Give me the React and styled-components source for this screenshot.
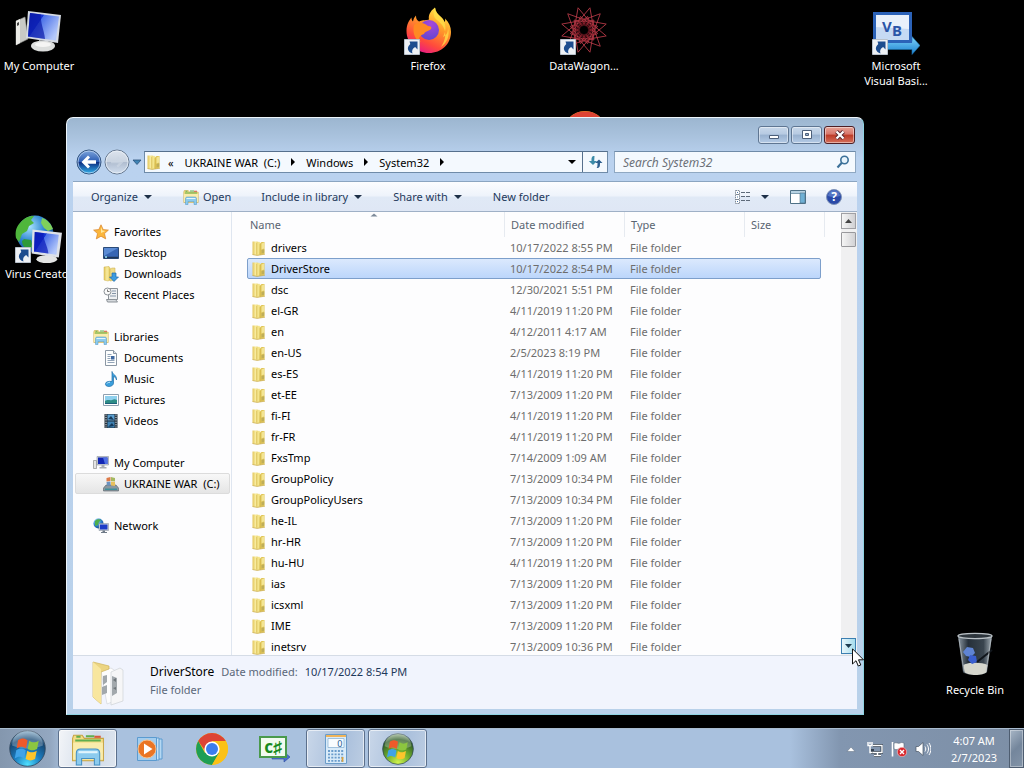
import styled, { createGlobalStyle } from 'styled-components';

const GlobalStyle = createGlobalStyle`
  * {
    box-sizing: border-box;
  }

  body {
    margin: 0;
    background: #000;
    font: 11px/15px 'Noto Sans', 'Open Sans', sans-serif;
    color: #000;
  }

  button, input, select {
    font: inherit;
    color: inherit;
  }

  button {
    padding: 0;
    border: 0;
    background: none;
    cursor: default;
  }

  svg {
    display: block;
    flex: none;
  }
`;

const Screen = styled.div`
  display: flex;
  flex-direction: column;
  height: 100vh;
  overflow: hidden;
`;

const Desktop = styled.main`
  position: relative;
  flex: 1;
  min-height: 0;
`;

const Shortcut = styled.button`
  position: absolute;
  left: ${(p) => p.$x}px;
  top: ${(p) => p.$y}px;
  width: 76px;
  display: flex;
  flex-direction: column;
  align-items: center;
  gap: 3px;
  color: #fff;
  white-space: nowrap;
`;

/* ---------- window ---------- */

const Window = styled.section`
  position: absolute;
  left: 66px;
  right: 160px;
  top: 117px;
  bottom: 13px;
  display: flex;
  flex-direction: column;
  padding: 0 6px 5px;
  border: 1px solid #8fd3e2;
  border-top-color: #eef6fc;
  border-left-color: #eef6fc;
  border-radius: 7px 7px 0 0;
  background: linear-gradient(#9cb6d0 0, #a9c2dd 18px, #bad2ef 40px, #b9d1ea 100%);
`;

const TitleBar = styled.div`
  display: flex;
  justify-content: flex-end;
  gap: 2px;
  height: 33px;
  padding: 8px 2px 0 0;
`;

const CaptionButton = styled.button`
  display: flex;
  align-items: center;
  justify-content: center;
  width: 31px;
  height: 18px;
  border: 1px solid ${(p) => (p.$close ? '#4d1f25' : '#5f7692')};
  border-radius: 3px;
  background: ${(p) =>
    p.$close
      ? 'linear-gradient(#e5a397 0, #d8766a 45%, #bd3a26 50%, #d4705c 100%)'
      : 'linear-gradient(#c8d8ea 0, #b6cae2 45%, #98b1cf 50%, #b4cbe6 100%)'};
  box-shadow: inset 0 0 0 1px rgba(255, 255, 255, 0.45);
`;

const AddressRow = styled.div`
  display: flex;
  align-items: center;
  height: 22px;
  margin-bottom: 8px;
  padding: 0 1px 0 3px;
`;

const Travel = styled.div`
  display: flex;
  align-items: center;
  gap: 2px;
  width: 68px;
`;

const AddressBar = styled.div`
  display: flex;
  flex: 462;
  height: 22px;
  border: 1px solid #6f8ba8;
  border-top-color: #56708d;
  background: #f4f9fe;
`;

const Crumbs = styled.nav`
  display: flex;
  flex: 1;
  align-items: center;
  gap: 11px;
  padding: 0 6px 0 1px;
`;

const CrumbRoot = styled.span`
  display: flex;
  align-items: center;
  gap: 6px;
`;

const Crumb = styled.a`
  color: #000;
  text-decoration: none;
  white-space: pre;
`;

const Chevron = styled.span`
  width: 0;
  height: 0;
  border: 4px solid transparent;
  border-right: 0;
  border-left-color: #000;
`;

const Triangle = styled.span`
  width: 0;
  height: 0;
  border: 4px solid transparent;
  border-bottom: 0;
  border-top-color: ${(p) => p.$color || '#1e3048'};
`;

const Push = styled.span`
  flex: 1;
`;

const RefreshButton = styled.button`
  display: flex;
  align-items: center;
  justify-content: center;
  width: 25px;
  border-left: 1px solid #56708d;
`;

const SearchBox = styled.label`
  display: flex;
  flex: 227;
  align-items: center;
  height: 22px;
  margin-left: 6px;
  padding: 0 5px 0 8px;
  border: 1px solid #8fa8c2;
  border-top-color: #6f8ba8;
  background: #f4f9fe;
`;

const SearchInput = styled.input`
  flex: 1;
  min-width: 0;
  padding: 0;
  border: 0;
  outline: 0;
  background: none;
  font-size: 12px;

  &::placeholder {
    color: #6b7078;
    font-style: italic;
    opacity: 1;
  }
`;

const Client = styled.div`
  display: flex;
  flex: 1;
  flex-direction: column;
  min-height: 0;
  border-top: 1px solid #8ba5c1;
  background: #fdfdfe;
`;

const Toolbar = styled.div`
  display: flex;
  align-items: center;
  height: 30px;
  padding: 0 15px 0 18px;
  border-bottom: 1px solid #9fb0c6;
  background: linear-gradient(#fcfdff 0, #eef3fb 48%, #e0e9f6 52%, #dfe7f5 100%);
  color: #1e395b;
`;

const ToolButton = styled.button`
  display: flex;
  align-items: center;
  gap: ${(p) => p.$gap || 6}px;
  margin-right: ${(p) => p.$after || 0}px;
`;

const Panes = styled.div`
  display: flex;
  flex: 1;
  min-height: 0;
`;

const Tree = styled.nav`
  display: flex;
  flex-direction: column;
  gap: 21px;
  width: 159px;
  padding: 9px 1px 0 2px;
  border-right: 1px solid #dfe6f0;
`;

const TreeItem = styled.a`
  display: flex;
  align-items: center;
  gap: 5px;
  height: 21px;
  padding-left: ${(p) => (p.$top ? 17 : 27)}px;
  border: 1px solid ${(p) => (p.$current ? '#dcdcdc' : 'transparent')};
  border-radius: 2px;
  background: ${(p) => (p.$current ? 'linear-gradient(#f8f8f8, #e5e5e5)' : 'none')};
  color: #000;
  text-decoration: none;
  white-space: pre;
`;

const ListPane = styled.div`
  flex: 1;
  min-width: 0;
  overflow: hidden;
`;

const FileTable = styled.table`
  display: block;
  margin-left: 15px;

  thead, tbody {
    display: block;
  }
`;

const HeadRow = styled.tr`
  display: grid;
  grid-template-columns: 258px 120px 120px 80px;
  height: 25px;
  color: #5a6572;
`;

const HeadCell = styled.th`
  position: relative;
  padding: 5px 0 0 ${(p) => (p.$first ? 3 : 6)}px;
  border-right: 1px solid #e6eaf0;
  font-weight: 400;
  text-align: left;
`;

const SortMark = styled.svg`
  position: absolute;
  left: 50%;
  top: 1px;
  margin-left: -6px;
`;

const FileRow = styled.tr`
  display: grid;
  grid-template-columns: 256px 120px 120px 76px;
  width: 574px;
  height: 21px;
  border: 1px solid ${(p) => (p.$selected ? '#7d9fcb' : 'transparent')};
  border-radius: 2px;
  background: ${(p) => (p.$selected ? 'linear-gradient(#dbe9fd, #bcd6fb)' : 'none')};
  color: #6d6d6d;
`;

const Cell = styled.td`
  display: flex;
  align-items: center;
  gap: 4px;
  padding: 0 0 0 ${(p) => (p.$name ? 3 : 6)}px;
  color: ${(p) => (p.$name ? '#000' : 'inherit')};
  white-space: nowrap;
`;

const ScrollBar = styled.div`
  display: flex;
  flex-direction: column;
  width: 16px;
  padding: 1px 1px 1px 0;
  background: #f0f0f1;
`;

const ScrollButton = styled.button`
  display: flex;
  align-items: center;
  justify-content: center;
  height: 16px;
  border: 1px solid ${(p) => (p.$hot ? '#3c7fb1' : '#a0a0a4')};
  background: ${(p) =>
    p.$hot ? 'linear-gradient(90deg, #e8f6fb, #a5dcec)' : 'linear-gradient(90deg, #f6f6f6, #d0d0d3)'};
`;

const Thumb = styled.div`
  height: 15px;
  margin: 3px 0 auto;
  border: 1px solid #98989c;
  border-radius: 1px;
  background: linear-gradient(90deg, #f5f5f5, #d2d2d5);
`;

const Details = styled.footer`
  display: flex;
  align-items: center;
  gap: 20px;
  height: 54px;
  padding-left: 17px;
  border-top: 1px solid #d5dce6;
  background: #f1f4fd;
  color: #5a6779;
`;

const DetailText = styled.div`
  display: grid;
  grid-template-columns: auto auto auto;
  column-gap: 7px;
  row-gap: 3px;
  padding-bottom: 5px;
`;

const DetailTitle = styled.span`
  color: #000;
  font-size: 12px;
`;

const DetailValue = styled.span`
  color: #1e395b;
`;

/* ---------- taskbar ---------- */

const Taskbar = styled.footer`
  display: flex;
  align-items: stretch;
  height: 40px;
  border-top: 1px solid #a9bccf;
  background: linear-gradient(90deg, #8497ae 0, #93a7c0 50px, #a9c1de 66px, #a9c1de 790px, #8296b0 840px, #7d8fa6 100%);
`;

const TaskButton = styled.button`
  display: flex;
  align-items: center;
  justify-content: center;
  width: ${(p) => p.$width || 59}px;
  margin-right: 3px;
  border: 1px solid ${(p) => (p.$open ? '#5c708c' : 'transparent')};
  border-radius: 3px;
  background: ${(p) => {
    if (p.$active) return 'linear-gradient(100deg, #f3f5f8, #cfdae8 60%, #dfe6ef)';
    return p.$open ? 'linear-gradient(100deg, #c9d7e9, #a9bfdc 60%, #bccde2)' : 'none';
  }};
  box-shadow: ${(p) => (p.$open ? 'inset 0 0 0 1px rgba(255, 255, 255, 0.6)' : 'none')};
`;

const Tray = styled.div`
  display: flex;
  align-items: center;
  gap: 8px;
  margin-left: auto;
`;

const Clock = styled.time`
  width: 70px;
  margin-right: -8px;
  color: #fff;
  line-height: 17px;
  text-align: center;
`;

const ShowDesktop = styled.button`
  width: 15px;
  align-self: stretch;
  border: 1px solid #4e5d70;
  background: linear-gradient(135deg, #a8b6c6, #74869c 50%, #8394a8);
  box-shadow: inset 0 0 0 1px rgba(255, 255, 255, 0.35);
`;

const Pointer = styled.svg`
  position: absolute;
  right: 160px;
  bottom: 61px;
`;

/* ---------- drawings ---------- */

const Gradients = () => (
  <svg width="0" height="0" style={{ position: 'absolute' }} aria-hidden="true">
    <defs>
      <linearGradient id="folder" x2="1" y2="0">
        <stop offset="0" stopColor="#e2c55a" />
        <stop offset="0.5" stopColor="#f8eb9e" />
        <stop offset="1" stopColor="#e6cd62" />
      </linearGradient>
      <linearGradient id="screenBlue" x2="1" y2="0.6">
        <stop offset="0" stopColor="#0b1fae" />
        <stop offset="0.4" stopColor="#1636d6" />
        <stop offset="0.42" stopColor="#4a70e8" />
        <stop offset="1" stopColor="#b4c8fa" />
      </linearGradient>
      <radialGradient id="globe" cx="0.35" cy="0.3" r="0.8">
        <stop offset="0" stopColor="#a8e2ff" />
        <stop offset="0.5" stopColor="#2f86d0" />
        <stop offset="1" stopColor="#0b3a80" />
      </radialGradient>
      <linearGradient id="fox" x1="0.8" y1="0" x2="0.3" y2="1">
        <stop offset="0" stopColor="#fff04a" />
        <stop offset="0.4" stopColor="#ff9a2a" />
        <stop offset="0.75" stopColor="#ff4a3c" />
        <stop offset="1" stopColor="#e8178a" />
      </linearGradient>
      <radialGradient id="foxCore" cx="0.6" cy="0.2" r="0.9">
        <stop offset="0" stopColor="#a648dc" />
        <stop offset="1" stopColor="#5a45cf" />
      </radialGradient>
      <radialGradient id="orbBlue" cx="0.5" cy="0.95" r="0.95">
        <stop offset="0" stopColor="#4fe0ff" />
        <stop offset="0.4" stopColor="#1a7cc0" />
        <stop offset="0.75" stopColor="#174873" />
        <stop offset="1" stopColor="#8fb4cf" />
      </radialGradient>
      <radialGradient id="orbGreen" cx="0.5" cy="0.95" r="0.95">
        <stop offset="0" stopColor="#d2f44e" />
        <stop offset="0.45" stopColor="#6aa82c" />
        <stop offset="0.8" stopColor="#2f5c26" />
        <stop offset="1" stopColor="#a5bd9c" />
      </radialGradient>
      <linearGradient id="backBlue" x2="0" y2="1">
        <stop offset="0" stopColor="#7fa6dc" />
        <stop offset="0.48" stopColor="#2c5db4" />
        <stop offset="0.52" stopColor="#0d2f83" />
        <stop offset="1" stopColor="#35b6ee" />
      </linearGradient>
      <linearGradient id="forwardGrey" x2="0" y2="1">
        <stop offset="0" stopColor="#dde4ee" />
        <stop offset="0.48" stopColor="#c9d3e0" />
        <stop offset="0.52" stopColor="#b0bdd0" />
        <stop offset="1" stopColor="#d3e0f0" />
      </linearGradient>
      <linearGradient id="arrowBlue" x2="0" y2="1">
        <stop offset="0" stopColor="#7fd4fa" />
        <stop offset="1" stopColor="#1a7fd0" />
      </linearGradient>
      <linearGradient id="glass" x2="1" y2="0">
        <stop offset="0" stopColor="#8d99a3" />
        <stop offset="0.3" stopColor="#26303a" />
        <stop offset="0.75" stopColor="#3a454f" />
        <stop offset="1" stopColor="#a5b0b8" />
      </linearGradient>
    </defs>
  </svg>
);

const ShortcutBadge = () => (
  <g>
    <path d="M0.5 32.5h15v15h-15z" fill="#eef1f5" stroke="#b9c2cc" />
    <path d="M5.500 34.500h8v8l-2.400-2.400c-2.600 1.800-3.600 3.500-2.600 6.400-4.800-1.200-6.400-5.800-2.200-9.400z" fill="#1d4d8f" />
  </g>
);

const ComputerArt = () => (
  <svg width="48" height="48" viewBox="0 0 48 48">
    <path d="M1 14l9-4 3 22-12 6z" fill="#c9cac6" stroke="#8c8d8a" strokeWidth="0.6" />
    <path d="M1 14l4-2v24l-4 2z" fill="#ecece8" />
    <path d="M2 16l2-1v3l-2 1z" fill="#444" />
    <path d="M24 33l8 2v5h-8z" fill="#b5b7b8" />
    <ellipse cx="28" cy="39" rx="12" ry="5.500" fill="#dcdedd" />
    <ellipse cx="28" cy="37.500" rx="8" ry="2.600" fill="#f5f5f4" />
    <path d="M13 4l33 4-3 28-32-5z" fill="#d5dae2" />
    <path d="M15 6l29 3.500-3 24-28-4z" fill="url(#screenBlue)" />
    <path d="M15 6l11 1.500c-1 8 3 15 4 24.500l-17-2.500z" fill="#0a19a8" opacity="0.7" />
  </svg>
);

const VirusArt = () => (
  <svg width="48" height="48" viewBox="0 0 48 48">
    <circle cx="20" cy="19" r="18.500" fill="url(#globe)" />
    <path d="M5 8c5-6 9-7 14-7l-3 4 3 3-5 3-2 5-5 3-3 8-3-4c-1-6 0-11 4-15z" fill="#4fb63c" />
    <path d="M27 3c6 2 9 6 11 11l-5 2-4-3-3-5z" fill="#7fd05a" />
    <path d="M9 24l7 1 2 7-5 3c-4-2-6-6-6-9z" fill="#2f9a3a" />
    <g transform="translate(11 13) scale(0.800)">
      <path d="M24 33l8 2v6h-8z" fill="#b5b7b8" />
      <ellipse cx="26" cy="39" rx="13" ry="5" fill="#e3e4e3" />
      <path d="M8 2l37 4-4 31-34-5z" fill="#dde1e8" />
      <path d="M11 5l30 3.500-3 25-28-4z" fill="url(#screenBlue)" />
      <path d="M11 5l11 1.500c-1 8 5 15 6 25.500l-18-2.500z" fill="#0a19b8" opacity="0.7" />
    </g>
    <ShortcutBadge />
  </svg>
);

const FirefoxArt = () => (
  <svg width="48" height="48" viewBox="0 0 48 48">
    <path
      d="M2.500 24c0-7 3-11 5-13.500 0 2 .5 3 1.500 4 .5-3 1.500-4.500 3-6 0 2.500.5 4.500 3 6 4-2 8-1 10-2C24 9 26 4 31 0.500c.5 4.500 3 7 6 9.500 2 1.500 3 3.500 3.500 5 .8-1 .8-2 .5-3.500C45 15 47 20 47 25c0 12-9.500 21-22 21S2.500 36 2.500 24z"
      fill="url(#fox)"
    />
    <path d="M31 0.500c.5 4.500 3 7 6 9.500 5 5 6 13 2 20 4-2 5-5 5-9 2 8-1 15-7 19 8-12 4-21-4-27-4-3-4-8-2-12.500z" fill="#ffe14a" opacity="0.75" />
    <circle cx="25" cy="23" r="10" fill="url(#foxCore)" />
    <path d="M10 18c4-3 9-3 14 1 3 0 4 1 3 3-2 2-6 2-7 5-4 1-7 5-3 8-5-1-9-8-7-17z" fill="#ff8a22" />
    <ShortcutBadge />
  </svg>
);

const STAR_SPOKES = [0, 30, 60, 90, 120, 150, 180, 210, 240, 270, 300, 330];

const StarArt = () => (
  <svg width="48" height="48" viewBox="0 0 48 48">
    <g fill="none" stroke="#b83a48" strokeWidth="0.8">
      {STAR_SPOKES.map((angle) => (
        <g key={angle} transform={`rotate(${angle + 15} 24 23)`}>
          <path d="M24 0l-7 15M24 0l7 15M24 9l-6 8M24 9l6 8" />
          <circle cx="24" cy="14.500" r="2.500" stroke="#93222e" />
          <circle cx="24" cy="17" r="1.500" stroke="#7d1c28" />
        </g>
      ))}
    </g>
    <ShortcutBadge />
  </svg>
);

const ChromeArt = ({ size }) => (
  <svg width={size} height={size} viewBox="0 0 32 32">
    <circle cx="16" cy="16" r="16" fill="#fbc116" />
    <path d="M2.200 8A16 16 0 0 1 29.800 8L16 8.500 10 19z" fill="#dd4435" />
    <path d="M2.200 8A16 16 0 0 0 16 32L23 20 16 16 9 20z" fill="#1e9e54" />
    <path d="M29.800 8A16 16 0 0 1 16 32L23 20 16 8.500 16 8z" fill="#fbc116" />
    <circle cx="16" cy="16" r="7.600" fill="#fff" />
    <circle cx="16" cy="16" r="6" fill="#3b7ded" />
  </svg>
);

const VisualBasicArt = () => (
  <svg width="48" height="48" viewBox="0 0 48 48">
    <path d="M10 34.500h30v-5l8 9-8 9v-5H10z" fill="url(#arrowBlue)" stroke="#1b6fa8" strokeWidth="0.600" />
    <path d="M1 5h39v31H1z" fill="#2b62b8" />
    <path d="M4 8h33v25H4z" fill="#e9f1fb" />
    <path d="M4 20l33 2v11H4z" fill="#c6daf4" />
    <text x="10" y="25" fontSize="15" fontWeight="700" fill="#2a55a8" fontFamily="Noto Sans">V</text>
    <text x="20" y="29" fontSize="15" fontWeight="700" fill="#2a55a8" fontFamily="Noto Sans">B</text>
    <ShortcutBadge />
  </svg>
);

const RecycleArt = () => (
  <svg width="48" height="48" viewBox="0 0 48 48">
    <path d="M7 5h34l-5 36c-3 4-21 4-24 0z" fill="url(#glass)" />
    <path d="M12.500 34c4-3 19-3 24 0l-1 7c-3 4-19 4-22 0z" fill="#d5d6cd" />
    <path d="M12 21l4-5 6 1 2 5-4 4-5-1z" fill="#5f84d4" />
    <path d="M17 29l2-5 6 1 1 6-5 2z" fill="#3a5fd0" />
    <path d="M41 19L26 31" stroke="#11161c" strokeWidth="2" />
    <ellipse cx="24" cy="5" rx="17" ry="2.600" fill="#2d353c" stroke="#b9c0c5" strokeWidth="1.400" />
    <path d="M8 8l5 32M40 8l-5 32" stroke="#c0c6ca" strokeWidth="1" opacity="0.600" />
  </svg>
);

const FolderIcon = () => (
  <svg width="16" height="16" viewBox="0 0 16 16">
    <path d="M1.500 1.500h5l1 1v12l-1.500.8-4.500-.8z" fill="url(#folder)" />
    <path d="M6 3l2-1.500 1.500 1.500v11L7 15.500 5.800 14.500z" fill="#f4e58c" />
    <path d="M9 3.500l1.500-1.500h3v12L8.500 15z" fill="#e0c558" />
    <path d="M10.500 3.500l2.500-1v6l-2.500 1z" fill="#f3e593" />
    <path d="M10.500 10l2.800-.8v3.500l-2.800.8z" fill="#bfae58" />
    <path d="M5.800 3v11.500M9 4v10.500" stroke="#cfae42" strokeWidth="0.600" />
    <path d="M1.500 14.500l4.500.9 8-1.200" fill="none" stroke="#c6a53c" strokeWidth="0.700" />
  </svg>
);

const LibraryIcon = ({ size = 16 }) => (
  <svg width={size} height={size} viewBox="0 0 32 32">
    <path d="M1.500 6l1-3h8l2 3h18v21h-29z" fill="#f3dc84" stroke="#c7a443" />
    <path d="M4 8h24M14 4h8M5 4.500h4" stroke="#5fae4e" strokeWidth="2" />
    <path d="M22 4.500h6" stroke="#d8593a" strokeWidth="2" />
    <path d="M2 10h28v16H2z" fill="#faecac" />
    <path d="M5 20c0-3 1-4 4-4h14c3 0 4 1 4 4v11h-5v-6H10v6H5z" fill="#8ccbee" stroke="#4791c4" />
    <path d="M7 19h18" stroke="#e2f5fd" strokeWidth="2" />
  </svg>
);

const StarIcon = () => (
  <svg width="16" height="16" viewBox="0 0 16 16">
    <path d="M8 .8l2.200 4.800 5.200.5-3.900 3.500 1.200 5.300L8 12.200l-4.700 2.700 1.200-5.300L.6 6.100l5.200-.5z" fill="#fbb63c" stroke="#d9822b" strokeWidth="0.700" />
    <path d="M8 3l1.400 3.600 3 .3L8 9z" fill="#ffe9a0" />
  </svg>
);

const DesktopIcon = () => (
  <svg width="16" height="16" viewBox="0 0 16 16">
    <path d="M.5 2.500h15v11H.5z" fill="#3766b4" stroke="#2a4a78" />
    <path d="M1 3h14L1 11z" fill="#5b8bd4" />
    <path d="M1 12.500h14" stroke="#1e3555" strokeWidth="1.500" />
    <path d="M2 11h2v2H2z" fill="#7fc0d8" />
  </svg>
);

const DownloadIcon = () => (
  <svg width="16" height="16" viewBox="0 0 16 16">
    <path d="M1 1l5-.5L7 2v12l-2 1-4-1z" fill="url(#folder)" stroke="#cdb04c" strokeWidth="0.500" />
    <path d="M7 3l2-1h3v12l-5 1z" fill="#efdc88" stroke="#c9aa45" strokeWidth="0.500" />
    <path d="M9 7h4v4h2.500L11 15.500 6.500 11H9z" fill="#3c9be0" stroke="#1f6cae" strokeWidth="0.700" />
  </svg>
);

const RecentIcon = () => (
  <svg width="16" height="16" viewBox="0 0 16 16">
    <path d="M5.500 1.500h9v11h-9z" fill="#eef0f2" stroke="#8c9298" />
    <path d="M3.500 12.500h9l2 2.500h-10z" fill="#d6dade" stroke="#8c9298" />
    <path d="M9 4h4M9 6.500h4M7 9h6" stroke="#8595a8" />
    <circle cx="4.500" cy="4.500" r="3.500" fill="#fafafa" stroke="#8c9298" />
    <path d="M4.500 2.500v2h2" stroke="#555" fill="none" strokeWidth="0.800" />
  </svg>
);

const DocumentIcon = () => (
  <svg width="16" height="16" viewBox="0 0 16 16">
    <path d="M2.500 .5h8l3 3v12h-11z" fill="#fdfefe" stroke="#8b97a4" />
    <path d="M10.500 .5v3h3" fill="#dfe5ec" stroke="#8b97a4" />
    <path d="M4.500 4.500h4M4.500 6.500h3M4.500 8.500h3M4.500 10.500h7M4.500 12.500h7" stroke="#93a4b8" />
    <path d="M8 6h3.500v3.500H8z" fill="#3f68a0" />
  </svg>
);

const MusicIcon = () => (
  <svg width="16" height="16" viewBox="0 0 16 16">
    <path d="M9 .5c.5 3 5 3.500 4.500 8.500-.5-2-1.500-3-3-3.500v6.500c0 2-2 3.500-4.500 3.500S2 14.300 2.500 12.500 5.500 10 9 10.500z" fill="#3b9fdc" stroke="#1f6ea8" strokeWidth="0.700" />
    <path d="M4 12.500c.5-1 1.500-1.300 3-1.200" stroke="#bfe6fa" fill="none" />
  </svg>
);

const PictureIcon = () => (
  <svg width="16" height="16" viewBox="0 0 16 16">
    <path d="M.5 2.500h15v11H.5z" fill="#fff" stroke="#8fa0b0" />
    <path d="M2 4h12v8H2z" fill="#8fd0ee" />
    <path d="M2 9c3-2 5 0 7-1s3-1 5 0v4H2z" fill="#2d8c86" />
    <path d="M2 11h12v1H2z" fill="#1d5f7a" />
  </svg>
);

const VideoIcon = () => (
  <svg width="16" height="16" viewBox="0 0 16 16">
    <path d="M1.500 1h13v14h-13z" fill="#23303c" />
    <path d="M4.500 1.500h7v6h-7z" fill="#5b9fd0" />
    <path d="M4.500 8.500h7v6h-7z" fill="#3f83b5" />
    <path d="M5 6l3-3 3 4zM5 14l4-4 2 3z" fill="#153a5c" />
    <path d="M3 1.500v13M13 1.500v13" stroke="#f4f6f8" strokeDasharray="1.200 1.200" />
  </svg>
);

const PcIcon = () => (
  <svg width="16" height="16" viewBox="0 0 16 16">
    <path d="M.5 5.500h3v8h-3z" fill="#e4e4e4" stroke="#8e8e8e" strokeWidth="0.700" />
    <path d="M4 1.500h11.500v8.500H4z" fill="#cdd3dc" stroke="#8b929c" strokeWidth="0.600" />
    <path d="M5 2.500h9.500V9H5z" fill="#1226b4" />
    <path d="M10 2.500h4.500V9H12z" fill="#4f70e4" />
    <path d="M8.500 10h3v2h-3zM6.500 12h7v1.500h-7z" fill="#a9adb2" />
  </svg>
);

const DriveIcon = () => (
  <svg width="16" height="16" viewBox="0 0 16 16">
    <path d="M3 9h10l2.500 3v3H.5v-3z" fill="#8a979f" stroke="#566068" strokeWidth="0.600" />
    <path d="M2 12.500h12v1.500H2z" fill="#3f8f9a" />
    <path d="M3.500 2l4-1v4l-4 .5z" fill="#dd7a48" />
    <path d="M8 1l4 1v3.500L8 5z" fill="#a5b860" />
    <path d="M3.500 6l4-.5v4L4 9.500z" fill="#6a92c0" />
    <path d="M8 5.500l4 .5v4l-4-.5z" fill="#e8c05c" />
  </svg>
);

const NetworkIcon = () => (
  <svg width="16" height="16" viewBox="0 0 16 16">
    <circle cx="5.500" cy="5.500" r="5" fill="url(#globe)" />
    <path d="M2 3c2-2 4-2 6-1L6 4 5 7 2 8z" fill="#4fae4a" />
    <path d="M6 5.500h9.500v7H6z" fill="#cdd3dc" stroke="#7e8896" strokeWidth="0.500" />
    <path d="M7 6.500h7.500v5H7z" fill="#1d3cc8" />
    <path d="M9.500 12.500h2.500V14H14v1H8v-1h1.500z" fill="#6f7a88" />
  </svg>
);

const BackIcon = () => (
  <svg width="26" height="26" viewBox="0 0 26 26">
    <circle cx="13" cy="13" r="12" fill="url(#backBlue)" stroke="#35557f" />
    <circle cx="13" cy="13" r="11" fill="none" stroke="#c7dcf3" opacity="0.700" />
    <path d="M5.500 13l6.500-6.500 2 2-2.500 2.700H20v3.600h-8.500L14 17.500l-2 2z" fill="#fff" />
  </svg>
);

const ForwardIcon = () => (
  <svg width="26" height="26" viewBox="0 0 26 26">
    <circle cx="13" cy="13" r="12" fill="url(#forwardGrey)" stroke="#66788f" />
    <circle cx="13" cy="13" r="11" fill="none" stroke="#eef4fa" opacity="0.700" />
    <path d="M19.500 13L14 7.500l-1.500 1.700 2.300 2.500H7v2.600h7.800l-2.300 2.500 1.500 1.700z" fill="#ccd6e3" opacity="0.700" />
  </svg>
);

const RefreshIcon = () => (
  <svg width="15" height="14" viewBox="0 0 15 14">
    <path d="M6.500 1C3.500 1 3.500 3 3.500 6H.8l4.200 4 4-4H6.200" fill="#3c8ba8" />
    <path d="M8.500 13c3.500 0 3.500-2 3.500-5h2.500L11 4.500 7.200 8H9.500C9.500 11 9.500 12 8.500 13z" fill="#2d5f8f" />
  </svg>
);

const SearchIcon = () => (
  <svg width="14" height="14" viewBox="0 0 14 14">
    <circle cx="8.500" cy="5" r="3.700" fill="#e8f4fc" stroke="#3c7199" strokeWidth="1.600" />
    <path d="M5.800 7.800L1.500 12.500" stroke="#3c7199" strokeWidth="2.200" />
  </svg>
);

const ViewIcon = () => (
  <svg width="16" height="14" viewBox="0 0 16 14">
    <path d="M.5.500h4v13h-4z" fill="#fff" stroke="#7d8794" strokeDasharray="1.500 0.700" />
    <path d="M1 4.500h3M1 9.500h3" stroke="#7d8794" />
    <path d="M2 2.500h1M2 7h1M2 11.500h1" stroke="#4a78b0" />
    <path d="M6 2.500h4M11 2.500h4M6 6.500h4M11 6.500h4M6 10.500h4M11 10.500h4" stroke="#5e6a79" />
  </svg>
);

const PaneIcon = () => (
  <svg width="16" height="14" viewBox="0 0 16 14">
    <path d="M.5.500h15v13H.5z" fill="#fff" stroke="#4f7186" />
    <path d="M1 1h14v2H1z" fill="#b7d2e2" />
    <path d="M1 3.500h9" stroke="#7f9fb2" />
    <path d="M10 3h5v10h-5z" fill="#6fb0d4" stroke="#4f7186" strokeWidth="0.600" />
  </svg>
);

const HelpIcon = () => (
  <svg width="16" height="16" viewBox="0 0 16 16">
    <circle cx="8" cy="8" r="7.500" fill="#2b4aa8" stroke="#7f93b8" />
    <path d="M2 7a6 6 0 0 1 12 0c-4 1.500-8 1.500-12 0z" fill="#5575c4" />
    <text x="8" y="12" fontSize="12" fontWeight="700" fill="#fff" textAnchor="middle" fontFamily="Noto Sans">?</text>
  </svg>
);

const BigFolder = () => (
  <svg width="40" height="48" viewBox="0 0 40 48">
    <path d="M11 12l10-3 6 4v28l-10 4z" fill="#fdfdfd" stroke="#d4d7da" strokeWidth="0.700" />
    <path d="M21 13l9-4 3 2v31l-12 4z" fill="#f6f6f7" stroke="#cfd3d6" strokeWidth="0.700" />
    <path d="M13 17l4-1v7l-4 3zM12 28l5-2v8l-5 2zM22 17l5 2v15l-5 3z" fill="#a2a8ac" />
    <path d="M23 21l3-2v4zM23 29l3-1v3z" fill="#6d7478" />
    <path d="M3 3l16 4v3l-8 3v32l-8-7z" fill="#ecd582" stroke="#cfb35c" strokeWidth="0.700" />
    <path d="M3 3l8 7v35l-8-7z" fill="#f8e69e" />
  </svg>
);

const Flag = () => (
  <g transform="translate(18 18.500) scale(1.150) translate(-18 -18.500)">
    <path d="M10 11c3-2 5-2 8 0l-1.200 7c-3-2-5-2-8 0z" fill="#ee5a2a" />
    <path d="M19.500 11.500c3 2 5 1.500 8 0l-1.400 7c-3 1.500-5 1.500-8 0z" fill="#8cc63f" />
    <path d="M8.500 19.500c3-2 5-2 8 0l-1.300 7c-3-2-5-2-8 0z" fill="#3fa3e8" />
    <path d="M17.800 20c3 2 5 1.500 8 0l-1.400 7c-3 1.500-5 1.500-8 0z" fill="#fdc52c" />
  </g>
);

const Orb = ({ size, fill }) => (
  <svg width={size} height={size} viewBox="0 0 36 36">
    <circle cx="18" cy="18" r="17.300" fill={`url(#${fill})`} stroke="#30465c" strokeWidth="0.800" />
    <path d="M3 15a15 15 0 0 1 30 0c-9 4-21 4-30 0z" fill="#fff" opacity="0.250" />
    <Flag />
  </svg>
);

const PlayerArt = () => (
  <svg width="28" height="28" viewBox="0 0 28 28">
    <path d="M6 4h20v20H6z" fill="#b5d8f2" stroke="#5b9bd0" />
    <path d="M4 3h19v22H4z" fill="#c9e3f6" stroke="#5b9bd0" />
    <path d="M1.500 2.500h19v23h-19z" fill="#a3cdee" stroke="#5b9bd0" />
    <circle cx="11" cy="14" r="9" fill="#ea7524" stroke="#f8c08a" />
    <path d="M8 8.500l8.500 5.500L8 19.500z" fill="#fff" />
  </svg>
);

const CSharpArt = () => (
  <svg width="32" height="28" viewBox="0 0 32 28">
    <path d="M14 20h12v-3l6 5-6 5v-3H14z" fill="#4a6fd0" stroke="#2b4a9a" strokeWidth="0.600" />
    <path d="M2 2h26v20H2z" fill="#f2fbf0" stroke="#4a9a4c" strokeWidth="2" />
    <text x="15" y="18" fontSize="17" fontWeight="700" fill="#168a1c" textAnchor="middle" fontFamily="Noto Sans">c♯</text>
  </svg>
);

const CalcArt = () => (
  <svg width="24" height="32" viewBox="0 0 24 32">
    <path d="M1.500 1.500h21v29h-21z" fill="#d9ebf9" stroke="#6b9cc8" />
    <path d="M2 2h20v2H2z" fill="#f0b45a" />
    <path d="M4 5.500h16v9H4z" fill="#f8fcff" stroke="#83acd0" strokeWidth="0.700" />
    <text x="18.500" y="13.500" fontSize="9" fill="#2a5f94" textAnchor="end" fontFamily="Noto Sans">0</text>
    <path d="M4 18h16M4 21.300h16M4 24.600h16M4 27.900h16" stroke="#6a9ccb" strokeWidth="1.800" strokeDasharray="2 1.300" />
    <path d="M18.500 24v4.800" stroke="#dca23c" strokeWidth="1.800" />
  </svg>
);

const EthernetIcon = () => (
  <svg width="16" height="16" viewBox="0 0 16 16" fill="none" stroke="#fff" strokeWidth="1.400">
    <path d="M6 4.500h9v7H5.500V8M10.500 12v2M7 14.500h7" stroke="#33404f" strokeWidth="3" />
    <path d="M6 4.500h9v7H5.500M10.500 12v2M7 14.500h7" />
    <path d="M1 1v3.500h4V1M3 1v2M3 5v6.500h2.500" />
  </svg>
);

const FlagIcon = () => (
  <svg width="16" height="16" viewBox="0 0 16 16">
    <path d="M1.500 1v14.500" stroke="#fff" strokeWidth="1.600" />
    <path d="M3 2c3-1 4 1 6 0s3 0 4 0v6c-2 1-3-.5-5 0s-3 1-5 0z" fill="#fff" stroke="#566475" strokeWidth="0.600" />
    <circle cx="11" cy="11" r="4.700" fill="#d9282e" stroke="#f3d0d0" strokeWidth="0.600" />
    <path d="M9 9l4 4M13 9l-4 4" stroke="#fff" strokeWidth="1.400" />
  </svg>
);

const VolumeIcon = () => (
  <svg width="16" height="16" viewBox="0 0 16 16">
    <path d="M1 5.500h2.500L8 1.500v13l-4.500-4H1z" fill="#fff" stroke="#465363" strokeWidth="0.700" />
    <path d="M10 5.500c1 1.500 1 3.500 0 5M12 3.500c2 3 2 6 0 9M14 2c2.500 4 2.500 8 0 12" fill="none" stroke="#fff" />
  </svg>
);

/* ---------- data ---------- */

const places = [
  [
    { label: 'Favorites', Icon: StarIcon, top: true },
    { label: 'Desktop', Icon: DesktopIcon },
    { label: 'Downloads', Icon: DownloadIcon },
    { label: 'Recent Places', Icon: RecentIcon },
  ],
  [
    { label: 'Libraries', Icon: LibraryIcon, top: true },
    { label: 'Documents', Icon: DocumentIcon },
    { label: 'Music', Icon: MusicIcon },
    { label: 'Pictures', Icon: PictureIcon },
    { label: 'Videos', Icon: VideoIcon },
  ],
  [
    { label: 'My Computer', Icon: PcIcon, top: true },
    { label: 'UKRAINE WAR  (C:)', Icon: DriveIcon, current: true },
  ],
  [{ label: 'Network', Icon: NetworkIcon, top: true }],
];

const files = [
  ['drivers', '10/17/2022 8:55 PM'],
  ['DriverStore', '10/17/2022 8:54 PM'],
  ['dsc', '12/30/2021 5:51 PM'],
  ['el-GR', '4/11/2019 11:20 PM'],
  ['en', '4/12/2011 4:17 AM'],
  ['en-US', '2/5/2023 8:19 PM'],
  ['es-ES', '4/11/2019 11:20 PM'],
  ['et-EE', '7/13/2009 11:20 PM'],
  ['fi-FI', '4/11/2019 11:20 PM'],
  ['fr-FR', '4/11/2019 11:20 PM'],
  ['FxsTmp', '7/14/2009 1:09 AM'],
  ['GroupPolicy', '7/13/2009 10:34 PM'],
  ['GroupPolicyUsers', '7/13/2009 10:34 PM'],
  ['he-IL', '7/13/2009 11:20 PM'],
  ['hr-HR', '7/13/2009 11:20 PM'],
  ['hu-HU', '4/11/2019 11:20 PM'],
  ['ias', '7/13/2009 11:20 PM'],
  ['icsxml', '7/13/2009 11:20 PM'],
  ['IME', '7/13/2009 11:20 PM'],
  ['inetsrv', '7/13/2009 10:36 PM'],
];

const SELECTED = 'DriverStore';

const Explorer = () => (
  <Window aria-label="System32">
    <TitleBar>
      <CaptionButton aria-label="Minimize">
        <svg width="12" height="10" viewBox="0 0 12 10">
          <path d="M1.500 5.500h9v3h-9z" fill="#fff" stroke="#4c5f7a" />
        </svg>
      </CaptionButton>
      <CaptionButton aria-label="Maximize">
        <svg width="12" height="10" viewBox="0 0 12 10">
          <path d="M1.500.500h9v8h-9z" fill="#fff" stroke="#4c5f7a" />
          <path d="M4.500 3.500h3v2h-3z" fill="#9db4d0" stroke="#4c5f7a" />
        </svg>
      </CaptionButton>
      <CaptionButton $close aria-label="Close">
        <svg width="12" height="10" viewBox="0 0 12 10">
          <path d="M2.500 1.500l7 7M9.500 1.500l-7 7" stroke="#5a2a30" strokeWidth="4" />
          <path d="M2.500 1.500l7 7M9.500 1.500l-7 7" stroke="#fff" strokeWidth="2.200" />
        </svg>
      </CaptionButton>
    </TitleBar>

    <AddressRow>
      <Travel>
        <button aria-label="Back"><BackIcon /></button>
        <button aria-label="Forward"><ForwardIcon /></button>
        <button aria-label="Recent pages">
          <svg width="10" height="8" viewBox="0 0 10 8">
            <path d="M1 2h8L5 6.500z" fill="#3f84b5" stroke="#2a4f78" strokeWidth="0.800" />
          </svg>
        </button>
      </Travel>
      <AddressBar>
        <Crumbs aria-label="Address">
          <CrumbRoot><FolderIcon />«</CrumbRoot>
          <Crumb href="#c">UKRAINE WAR  (C:)</Crumb>
          <Chevron />
          <Crumb href="#windows">Windows</Crumb>
          <Chevron />
          <Crumb href="#system32">System32</Crumb>
          <Chevron />
          <Push />
          <Triangle $color="#000" />
        </Crumbs>
        <RefreshButton aria-label="Refresh"><RefreshIcon /></RefreshButton>
      </AddressBar>
      <SearchBox>
        <SearchInput type="search" placeholder="Search System32" aria-label="Search System32" />
        <SearchIcon />
      </SearchBox>
    </AddressRow>

    <Client>
      <Toolbar>
        <ToolButton $after={31}>Organize <Triangle /></ToolButton>
        <ToolButton $gap={4} $after={30}><LibraryIcon />Open</ToolButton>
        <ToolButton $after={31}>Include in library <Triangle /></ToolButton>
        <ToolButton $after={31}>Share with <Triangle /></ToolButton>
        <ToolButton>New folder</ToolButton>
        <Push />
        <ToolButton $gap={10} $after={21} aria-label="Change your view"><ViewIcon /><Triangle /></ToolButton>
        <ToolButton $after={20} aria-label="Show the preview pane"><PaneIcon /></ToolButton>
        <ToolButton aria-label="Help"><HelpIcon /></ToolButton>
      </Toolbar>

      <Panes>
        <Tree aria-label="Places">
          {places.map((group) => (
            <div key={group[0].label}>
              {group.map(({ label, Icon, top, current }) => (
                <TreeItem key={label} href="#place" $top={top} $current={current}>
                  <Icon />
                  {label}
                </TreeItem>
              ))}
            </div>
          ))}
        </Tree>

        <ListPane>
          <FileTable cellSpacing="0">
            <thead>
              <HeadRow>
                <HeadCell $first>
                  Name
                  <SortMark width="8" height="4" viewBox="0 0 8 4">
                    <path d="M.5 3.500L4 .5l3.500 3z" fill="#7d8a99" />
                  </SortMark>
                </HeadCell>
                <HeadCell>Date modified</HeadCell>
                <HeadCell>Type</HeadCell>
                <HeadCell>Size</HeadCell>
              </HeadRow>
            </thead>
            <tbody>
              {files.map(([name, date]) => (
                <FileRow key={name} $selected={name === SELECTED}>
                  <Cell $name><FolderIcon />{name}</Cell>
                  <Cell>{date}</Cell>
                  <Cell>File folder</Cell>
                  <Cell />
                </FileRow>
              ))}
            </tbody>
          </FileTable>
        </ListPane>

        <ScrollBar>
          <ScrollButton aria-label="Scroll up">
            <svg width="7" height="4" viewBox="0 0 7 4"><path d="M0 4l3.500-4L7 4z" fill="#444" /></svg>
          </ScrollButton>
          <Thumb />
          <ScrollButton $hot aria-label="Scroll down">
            <svg width="7" height="4" viewBox="0 0 7 4"><path d="M0 0l3.500 4L7 0z" fill="#1d3c50" /></svg>
          </ScrollButton>
        </ScrollBar>
      </Panes>

      <Details>
        <BigFolder />
        <DetailText>
          <DetailTitle>DriverStore</DetailTitle>
          <span>Date modified:</span>
          <DetailValue>10/17/2022 8:54 PM</DetailValue>
          <span>File folder</span>
        </DetailText>
      </Details>
    </Client>
  </Window>
);

const App = () => (
  <Screen>
    <GlobalStyle />
    <Gradients />
    <Desktop>
      <Shortcut $x={1} $y={7}><ComputerArt />My Computer</Shortcut>
      <Shortcut $x={390} $y={7}><FirefoxArt />Firefox</Shortcut>
      <Shortcut $x={546} $y={7}><StarArt />DataWagon...</Shortcut>
      <Shortcut $x={858} $y={7}>
        <VisualBasicArt />
        <span>Microsoft<br />Visual Basi...</span>
      </Shortcut>
      <Shortcut $x={1} $y={215}><VirusArt />Virus Creator</Shortcut>
      <Shortcut $x={547} $y={111} aria-label="Chrome"><ChromeArt size={44} /></Shortcut>
      <Shortcut $x={937} $y={631}><RecycleArt />Recycle Bin</Shortcut>
      <Explorer />
      <Pointer width="12" height="19" viewBox="0 0 12 19">
        <path d="M.5.800v15.200l3.500-3.300 2.300 5.300 2.500-1-2.300-5.200h5z" fill="#fff" stroke="#111" />
      </Pointer>
    </Desktop>

    <Taskbar>
      <TaskButton $width={55} aria-label="Start"><Orb size={37} fill="orbBlue" /></TaskButton>
      <TaskButton $open $active aria-label="Windows Explorer"><LibraryIcon size={34} /></TaskButton>
      <TaskButton aria-label="Media Player"><PlayerArt /></TaskButton>
      <TaskButton aria-label="Google Chrome"><ChromeArt size={32} /></TaskButton>
      <TaskButton aria-label="Visual C#"><CSharpArt /></TaskButton>
      <TaskButton $open aria-label="Calculator"><CalcArt /></TaskButton>
      <TaskButton $open aria-label="Windows"><Orb size={32} fill="orbGreen" /></TaskButton>
      <Tray>
        <button aria-label="Show hidden icons">
          <svg width="16" height="8" viewBox="0 0 16 8"><path d="M4 6.500L8 2l4 4.500z" fill="#fff" stroke="#5d6c7f" strokeWidth="0.500" /></svg>
        </button>
        <EthernetIcon />
        <FlagIcon />
        <VolumeIcon />
        <Clock>4:07 AM<br />2/7/2023</Clock>
        <ShowDesktop aria-label="Show desktop" />
      </Tray>
    </Taskbar>
  </Screen>
);

export default App;
